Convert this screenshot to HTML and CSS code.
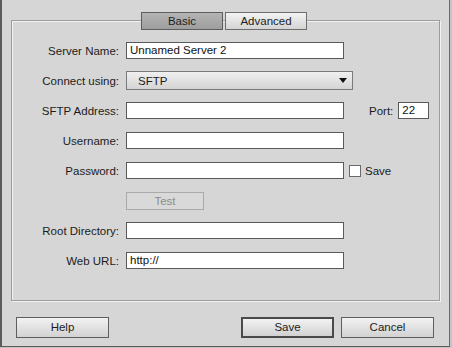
FILE: index.html
```html
<!DOCTYPE html>
<html lang="en">
<head>
  <meta charset="UTF-8">
  <title>Site Setup - Server</title>
  <link rel="stylesheet" href="styles.css">
</head>
<body>
  <div class="dialog">
    <!-- Settings group with tabs sitting on its top edge -->
    <div class="group">
      <div class="tabs">
        <div class="tab tab-active">Basic</div>
        <div class="tab">Advanced</div>
      </div>

      <div class="form">
        <div class="row">
          <label class="label">Server Name:</label>
          <div class="field">Unnamed Server 2</div>
        </div>
        <div class="row">
          <label class="label">Connect using:</label>
          <div class="select">
            <span>SFTP</span>
            <svg width="8" height="5" viewBox="0 0 8 5"><path d="M0 0H8L4 5Z" fill="#111"/></svg>
          </div>
        </div>
        <div class="row">
          <label class="label">SFTP Address:</label>
          <div class="field"></div>
          <span class="port-label">Port:</span>
          <div class="field field-port">22</div>
        </div>
        <div class="row">
          <label class="label">Username:</label>
          <div class="field"></div>
        </div>
        <div class="row">
          <label class="label">Password:</label>
          <div class="field"></div>
          <span class="checkbox"></span>
          <span class="check-label">Save</span>
        </div>
        <div class="row">
          <span class="label"></span>
          <div class="btn-test">Test</div>
        </div>
        <div class="row">
          <label class="label">Root Directory:</label>
          <div class="field"></div>
        </div>
        <div class="row">
          <label class="label">Web URL:</label>
          <div class="field">http://</div>
        </div>
      </div>
    </div>

    <!-- Dialog buttons -->
    <div class="buttons">
      <div class="btn">Help</div>
      <div class="btn btn-default">Save</div>
      <div class="btn">Cancel</div>
    </div>
  </div>
</body>
</html>
```

FILE: styles.css
```css
body {
  margin: 0;
  background: #c4c4c4;
  font-family: "Liberation Sans", Arial, sans-serif;
  font-size: 11.5px;
  color: #1c1c1c;
}
.dialog {
  width: 450px;
  height: 347px;
  box-sizing: border-box;
  background: #d6d6d6;
  border-left: 2px solid #5c5c5c;
  border-right: 1px solid #6a6a6a;
  border-bottom: 1px solid #5c5c5c;
  padding: 20px 0 0 9px;
}
.group {
  width: 429px;
  height: 281px;
  box-sizing: border-box;
  border: 1px solid #9c9c9c;
  box-shadow: 1px 1px 0 #f2f2f2, inset 1px 1px 0 #f2f2f2;
}
.tabs {
  display: flex;
  justify-content: center;
  gap: 2px;
  margin-top: -9px;
  margin-left: -3px;
}
.tab {
  width: 82px;
  height: 18px;
  box-sizing: border-box;
  border: 1px solid #6e6e6e;
  background: linear-gradient(#f3f3f3, #d4d4d4);
  text-align: center;
  line-height: 16px;
}
.tab-active {
  border-color: #5e5e5e;
  background: linear-gradient(#b4b4b4, #9e9e9e);
}
.form {
  display: flex;
  flex-direction: column;
  gap: 13px;
  margin-top: 12px;
}
.row {
  display: flex;
  align-items: center;
  height: 17px;
}
.label {
  width: 107px;
  margin-right: 7px;
  text-align: right;
}
.field {
  width: 218px;
  height: 17px;
  box-sizing: border-box;
  border: 1px solid #5a5a5a;
  background: #fff;
  padding-left: 3px;
  line-height: 15px;
  color: #111;
}
.select {
  width: 227px;
  height: 19px;
  box-sizing: border-box;
  border: 1px solid #7a7a7a;
  background: linear-gradient(#f0f0f0, #d4d4d4);
  display: flex;
  align-items: center;
  justify-content: space-between;
  padding: 0 5px 0 11px;
}
.port-label {
  margin-left: 25px;
  margin-right: 5px;
}
.field-port {
  width: 31px;
}
.checkbox {
  width: 12px;
  height: 12px;
  box-sizing: border-box;
  border: 1px solid #6a6a6a;
  background: #fff;
  margin-left: 5px;
  margin-right: 4px;
}
.btn-test {
  width: 78px;
  height: 18px;
  box-sizing: border-box;
  border: 1px solid #a9a9a9;
  background: #d9d9d9;
  color: #8c8c8c;
  text-align: center;
  line-height: 16px;
}
.buttons {
  display: flex;
  gap: 7px;
  width: 429px;
  box-sizing: border-box;
  margin-top: 16px;
  padding: 0 6px 0 5px;
}
.btn {
  width: 93px;
  height: 21px;
  box-sizing: border-box;
  border: 1px solid #5e5e5e;
  background: linear-gradient(#f2f2f2, #d2d2d2);
  text-align: center;
  line-height: 19px;
}
.btn-default {
  margin-left: auto;
  border: 2px solid #4a4a4a;
  line-height: 17px;
}
```
